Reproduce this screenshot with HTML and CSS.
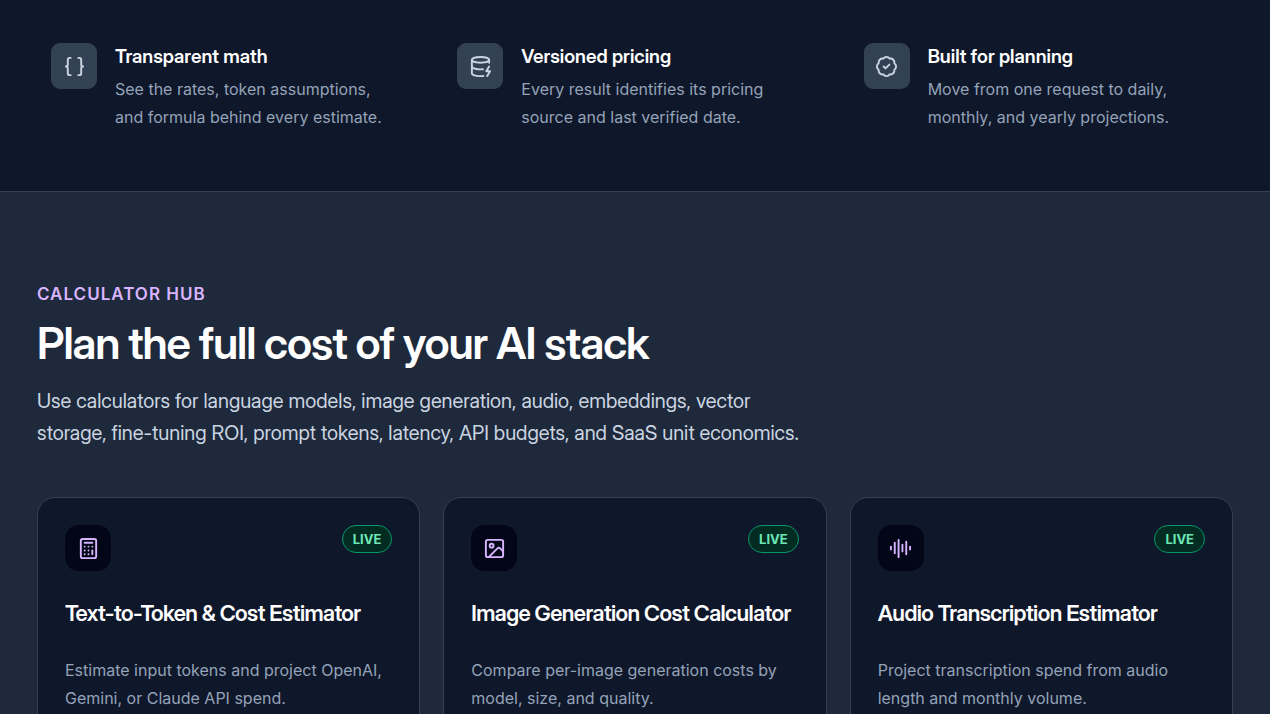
FILE: index.html
```html
<!DOCTYPE html>
<html lang="en">
    <head>
        <meta charset="UTF-8">
        <meta name="viewport" content="width=device-width, initial-scale=1">
        <title>Calculator Hub</title>
        <link rel="stylesheet" href="styles.css">
    </head>
    <body>
        <section class="features">
            <div class="grid">
                <div class="feature">
                    <span class="feature-icon">
                        <svg viewBox="0 0 24 24" aria-hidden="true"><path d="M8 3H7a2 2 0 0 0-2 2v5a2 2 0 0 1-2 2 2 2 0 0 1 2 2v5a2 2 0 0 0 2 2h1"/><path d="M16 21h1a2 2 0 0 0 2-2v-5a2 2 0 0 1 2-2 2 2 0 0 1-2-2V5a2 2 0 0 0-2-2h-1"/></svg>
                    </span>
                    <div>
                        <h2>Transparent math</h2>
                        <p>See the rates, token assumptions, and formula behind every estimate.</p>
                    </div>
                </div>
                <div class="feature">
                    <span class="feature-icon">
                        <svg viewBox="0 0 24 24" aria-hidden="true"><ellipse cx="12" cy="5" rx="9" ry="3"/><path d="M3 5v14a9 3 0 0 0 12 2.84"/><path d="M21 5v3"/><path d="m21 12-3 5h4l-3 5"/><path d="M3 12a9 3 0 0 0 11.59 2.87"/></svg>
                    </span>
                    <div>
                        <h2>Versioned pricing</h2>
                        <p>Every result identifies its pricing source and last verified date.</p>
                    </div>
                </div>
                <div class="feature">
                    <span class="feature-icon">
                        <svg viewBox="0 0 24 24" aria-hidden="true"><path d="M3.85 8.62a4 4 0 0 1 4.78-4.77 4 4 0 0 1 6.74 0 4 4 0 0 1 4.78 4.78 4 4 0 0 1 0 6.74 4 4 0 0 1-4.77 4.78 4 4 0 0 1-6.75 0 4 4 0 0 1-4.78-4.77 4 4 0 0 1 0-6.76Z"/><path d="m9 12 2 2 4-4"/></svg>
                    </span>
                    <div>
                        <h2>Built for planning</h2>
                        <p>Move from one request to daily, monthly, and yearly projections.</p>
                    </div>
                </div>
            </div>
        </section>

        <section class="hub">
            <p class="eyebrow">Calculator Hub</p>
            <h1>Plan the full cost of your AI stack</h1>
            <p class="intro">Use calculators for language models, image generation, audio, embeddings, vector storage, fine-tuning ROI, prompt tokens, latency, API budgets, and SaaS unit economics.</p>

            <div class="grid">
                <article class="card">
                    <div class="card-top">
                        <span class="card-icon">
                            <svg viewBox="0 0 24 24" aria-hidden="true"><rect width="16" height="20" x="4" y="2" rx="2"/><path d="M8 6h8M16 14v4M16 10h.01M12 10h.01M8 10h.01M12 14h.01M8 14h.01M12 18h.01M8 18h.01"/></svg>
                        </span>
                        <span class="badge">LIVE</span>
                    </div>
                    <h3>Text-to-Token &amp; Cost Estimator</h3>
                    <p>Estimate input tokens and project OpenAI, Gemini, or Claude API spend.</p>
                </article>
                <article class="card">
                    <div class="card-top">
                        <span class="card-icon">
                            <svg viewBox="0 0 24 24" aria-hidden="true"><rect width="18" height="18" x="3" y="3" rx="2"/><circle cx="9" cy="9" r="2"/><path d="m21 15-3.086-3.086a2 2 0 0 0-2.828 0L6 21"/></svg>
                        </span>
                        <span class="badge">LIVE</span>
                    </div>
                    <h3>Image Generation Cost Calculator</h3>
                    <p>Compare per-image generation costs by model, size, and quality.</p>
                </article>
                <article class="card">
                    <div class="card-top">
                        <span class="card-icon">
                            <svg viewBox="0 0 24 24" aria-hidden="true"><path d="M2 10v3M6 6v11M10 3v18M14 8v7M18 5v13M22 10v3"/></svg>
                        </span>
                        <span class="badge">LIVE</span>
                    </div>
                    <h3>Audio Transcription Estimator</h3>
                    <p>Project transcription spend from audio length and monthly volume.</p>
                </article>
            </div>
        </section>
    </body>
</html>
```

FILE: styles.css
```css
* {
    box-sizing: border-box;
}

body {
    margin: 0;
    background: #1e293b;
    font-family: Inter, "Liberation Sans", sans-serif;
    font-size: 16px;
    line-height: 28px;
    color: #94a3b8;
}

h1, h2, h3, p {
    margin: 0;
}

h1, h2, h3, .intro {
    font-family: "Inter Display", Inter, "Liberation Sans", sans-serif;
}

svg {
    display: block;
    width: 23px;
    height: 23px;
    fill: none;
    stroke: currentColor;
    stroke-width: 2;
    stroke-linecap: round;
    stroke-linejoin: round;
}

.grid {
    display: grid;
    grid-template-columns: repeat(3, 1fr);
    gap: 23px;
}

.features {
    padding: 43px 37px 60px;
    background: #0f172a;
    border-bottom: 1px solid #334155;
}

.feature {
    display: flex;
    gap: 18px;
    padding: 0 28px 0 14px;
}

.feature h2 {
    margin-bottom: 4px;
    font-size: 19px;
    font-weight: 600;
    color: #ffffff;
}

.feature-icon,
.card-icon {
    display: flex;
    flex: none;
    align-items: center;
    justify-content: center;
    width: 46px;
    height: 46px;
}

.feature-icon {
    border-radius: 9px;
    background: #334155;
    color: #cbd5e1;
}

.hub {
    padding: 88px 37px;
}

.eyebrow {
    font-size: 17px;
    font-weight: 600;
    letter-spacing: 1px;
    text-transform: uppercase;
    color: #d8b4fe;
}

.hub h1 {
    margin: 9px 0 16px;
    font-size: 44px;
    font-weight: 600;
    line-height: 52px;
    letter-spacing: -0.025em;
    color: #ffffff;
}

.intro {
    max-width: 774px;
    margin-bottom: 48px;
    font-size: 20px;
    line-height: 32px;
    color: #cbd5e1;
}

.card {
    min-height: 280px;
    padding: 27px;
    border: 1px solid #334155;
    border-radius: 18px;
    background: #0f172a;
}

.card-top {
    display: flex;
    align-items: flex-start;
    justify-content: space-between;
}

.card-icon {
    border-radius: 14px;
    background: #020617;
    color: #d8b4fe;
}

.badge {
    padding: 4px 10px;
    border: 1px solid #059669;
    border-radius: 14px;
    background: #022c22;
    font-size: 13px;
    font-weight: 700;
    line-height: 18px;
    color: #6ee7b7;
}

.card h3 {
    margin: 28px 0 29px;
    font-size: 22px;
    font-weight: 600;
    line-height: 28px;
    letter-spacing: -0.025em;
    color: #ffffff;
}
```
